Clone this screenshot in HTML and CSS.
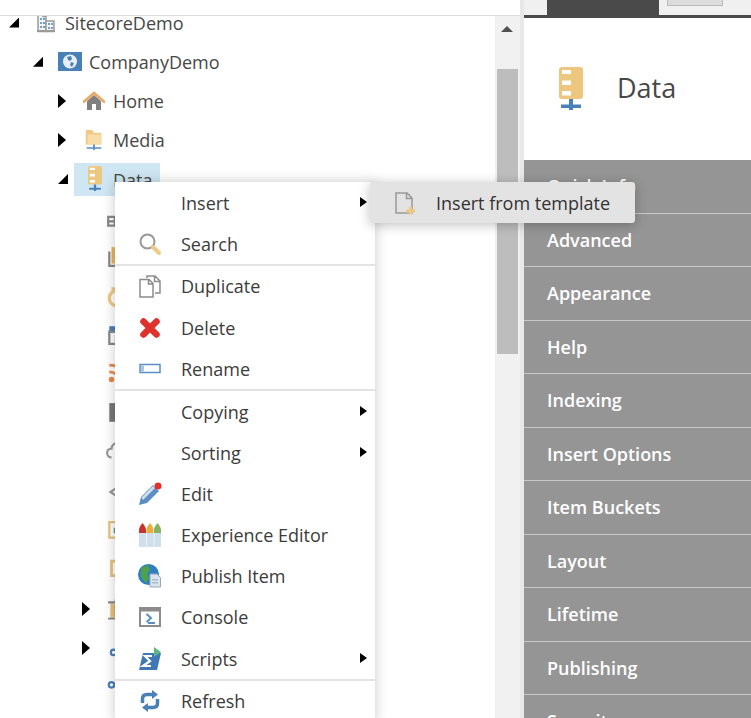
FILE: index.html
```html
<!doctype html>
<html>
<head>
	<meta charset="utf-8">
	<title>Content tree</title>
	<link rel="stylesheet" href="styles.css">
</head>
<body>
<div class="page">
	<div class="tree-pane">
		<div class="tree-top"></div>
		<div class="tree">
			<div class="node lvl0"><span class="arrow open"></span><svg class="ico" viewBox="0 0 22 22"><path fill="#f4f4f4" stroke="#9a9a9a" stroke-width="1.500" d="M3 1.500h5v3h3v15H3z"/><path fill="#f4f4f4" stroke="#9a9a9a" stroke-width="1.500" d="M11 9h8v10.500h-8z"/><path fill="#6fa0d4" d="M5 6h2v2H5zM8 6h2v2H8zM5 10h2v2H5zM8 10h2v2H8zM5 14h2v2H5zM8 14h2v2H8zM13 11h2v2h-2zM16 11h2v2h-2zM13 15h2v2h-2zM16 15h2v2h-2z"/><path fill="#9a9a9a" d="M2 18h18v2H2z"/></svg><span class="label">SitecoreDemo</span></div>
			<div class="node lvl1"><span class="arrow open"></span><svg class="ico wide" viewBox="0 0 24 20"><path fill="#4a80b8" d="M0 0h24v19H0z"/><circle cx="12" cy="9.500" r="7" fill="#e8eef5"/><path fill="#4a80b8" d="M9 5l4-1 1 3-2 2-2-1zM13 10l3 1-2 4-2-2z"/></svg><span class="label">CompanyDemo</span></div>
			<div class="node lvl2"><span class="arrow closed"></span><svg class="ico" viewBox="0 0 22 20"><path fill="#808080" d="M4 10l7-6 7 6v9h-5v-6H9v6H4z"/><path fill="none" stroke="#eba766" stroke-width="2.500" d="M0 11.500L11 2l11 9.500"/></svg><span class="label">Home</span></div>
			<div class="node lvl2"><span class="arrow closed"></span><svg class="ico" viewBox="0 0 20 24"><path fill="#f0c987" d="M1 1h7l2 3h8v13H1z"/><path fill="#f8dda8" d="M3 6h15v11H3z"/><path fill="#5b8fc4" d="M9 17h2v3h7v1.500h-7V23H9v-1.500H2V20h7z"/></svg><span class="label">Media</span></div>
			<div class="node lvl2"><span class="arrow open"></span><span class="pick"><svg class="data-ico" viewBox="0 0 24 43"><use href="#db"/></svg><span class="pick-label">Data</span></span></div>
			<div class="node lvl3"><span class="arrow none"></span><svg class="ico" viewBox="0 0 20 20"><path fill="none" stroke="#888" stroke-width="2" d="M2 9h16v8H2zM2 13h16M8 9v8M10 1v8"/></svg></div>
			<div class="node lvl3"><span class="arrow none"></span><svg class="ico" viewBox="0 0 20 20"><path fill="#888" d="M2 5h2v14H2zM2 17h14v2H2z"/><path fill="#e8b55c" d="M5 1h13v15H5z"/></svg></div>
			<div class="node lvl3"><span class="arrow none"></span><svg class="ico" viewBox="0 0 20 20"><circle cx="10" cy="12" r="7" fill="none" stroke="#f0c987" stroke-width="3"/><circle cx="10" cy="12" r="2" fill="#e8b55c"/><path fill="none" stroke="#f0c987" stroke-width="2" d="M6 6V3h8v3"/></svg></div>
			<div class="node lvl3"><span class="arrow none"></span><svg class="ico" viewBox="0 0 20 20"><path fill="#4a80b8" d="M3 2h14v6H3z"/><path fill="none" stroke="#888" stroke-width="2" d="M3 7h14v11H3z"/><path fill="#777" d="M8 10h3v6H8z"/></svg></div>
			<div class="node lvl3"><span class="arrow none"></span><svg class="ico" viewBox="0 0 20 20"><circle cx="5" cy="15" r="2.500" fill="#e58a4e"/><path fill="none" stroke="#e58a4e" stroke-width="2.500" d="M3 8c5 0 8 3 8 8M3 2c9 0 14 5 14 14"/></svg></div>
			<div class="node lvl3"><span class="arrow none"></span><svg class="ico" viewBox="0 0 20 20"><path fill="#777" d="M3 1h14v17H3z"/><path fill="#ddd" d="M9 3h5v13H9z"/></svg></div>
			<div class="node lvl3"><span class="arrow none"></span><svg class="ico" viewBox="0 0 20 20"><path fill="none" stroke="#999" stroke-width="2" d="M5 14a4 4 0 0 1 0-8 5 5 0 0 1 10 0"/><path fill="#e8b55c" d="M12 11h6v5h-6z"/></svg></div>
			<div class="node lvl3"><span class="arrow none"></span><svg class="ico" viewBox="0 0 20 20"><path fill="none" stroke="#999" stroke-width="2" d="M13 4l-9 6 9 6"/></svg></div>
			<div class="node lvl3"><span class="arrow none"></span><svg class="ico" viewBox="0 0 20 20"><path fill="none" stroke="#e8c27c" stroke-width="2" d="M3 2h14v14H3z"/><path fill="#5d9e80" d="M7 7h7v5H7z"/></svg></div>
			<div class="node lvl3"><span class="arrow none"></span><svg class="ico" viewBox="0 0 20 20"><path fill="none" stroke="#e8c27c" stroke-width="2.500" d="M5 2h12v13H5z"/><path fill="#5b8fc4" d="M8 18h5v2H8z"/></svg></div>
			<div class="node lvl3"><span class="arrow closed"></span><svg class="ico" viewBox="0 0 20 20"><path fill="#e8c27c" d="M3 5h14v13H3z"/><path fill="#888" d="M1 3h18v2H1zM1 18h18v1.500H1zM7 1h6v2H7zM7 7h2v9H7zM11 7h2v9h-2z"/></svg></div>
			<div class="node lvl3"><span class="arrow closed"></span><svg class="ico" viewBox="0 0 20 20"><path fill="none" stroke="#4a80b8" stroke-width="2" d="M11 5v6"/><circle cx="6" cy="14" r="2.500" fill="none" stroke="#4a80b8" stroke-width="2"/><path fill="#4a80b8" d="M11 13h7v2h-7z"/></svg></div>
			<div class="node lvl3"><span class="arrow none"></span><svg class="ico" viewBox="0 0 20 20"><circle cx="5" cy="8" r="2.500" fill="none" stroke="#4a80b8" stroke-width="2"/><path fill="#4a80b8" d="M10 7h8v2h-8z"/></svg></div>
		</div>
	</div>

	<div class="scrollbar">
		<div class="scroll-gap"></div>
		<div class="scroll-btn"><span class="scroll-up"></span></div>
		<div class="scroll-thumb"></div>
	</div>

	<div class="side">
		<div class="side-top">
			<div class="side-tab"></div>
			<div class="side-btn"></div>
		</div>
		<div class="side-head">
			<svg class="head-ico" viewBox="0 0 24 43"><use href="#db"/></svg>
			<span class="head-title">Data</span>
		</div>
		<div class="section">Quick Info</div>
		<div class="section">Advanced</div>
		<div class="section">Appearance</div>
		<div class="section">Help</div>
		<div class="section">Indexing</div>
		<div class="section">Insert Options</div>
		<div class="section">Item Buckets</div>
		<div class="section">Layout</div>
		<div class="section">Lifetime</div>
		<div class="section">Publishing</div>
		<div class="section">Security</div>
	</div>

	<div class="menu">
		<div class="item sub"><span class="item-ico"></span>Insert</div>
		<div class="item"><span class="item-ico"><svg viewBox="0 0 24 24"><circle cx="9.500" cy="9.500" r="7" fill="#fff" stroke="#999" stroke-width="2"/><path stroke="#f0c987" stroke-width="4" stroke-linecap="round" d="M15 15l6 6"/></svg></span>Search</div>
		<div class="rule"></div>
		<div class="item"><span class="item-ico"><svg viewBox="0 0 24 24"><path fill="none" stroke="#8c8c8c" stroke-width="1.500" d="M9 4V2h8l5 5v12h-5M2 5.500h9l4 4V23H2zM10.500 6v4h4M16.500 2.500v5h5"/></svg></span>Duplicate</div>
		<div class="item"><span class="item-ico"><svg viewBox="0 0 24 24"><path stroke="#e0312b" stroke-width="6.500" stroke-linecap="round" d="M5.500 5.500l13 13M18.500 5.500l-13 13"/></svg></span>Delete</div>
		<div class="item"><span class="item-ico"><svg viewBox="0 0 24 24"><path fill="#fff" stroke="#5b8fc4" stroke-width="1.500" d="M2 7.500h20v8H2z"/><path fill="#a8c4e0" d="M3 8.500h3v6H3z"/></svg></span>Rename</div>
		<div class="rule"></div>
		<div class="item sub"><span class="item-ico"></span>Copying</div>
		<div class="item sub"><span class="item-ico"></span>Sorting</div>
		<div class="item"><span class="item-ico"><svg viewBox="0 0 24 24"><path fill="#5b8fc4" d="M1 23l2-8L15 3l6 6L9 21z"/><path fill="#cfdff0" d="M3.500 15.500L15 4l2 2L5 18z"/><circle cx="20" cy="4" r="3.500" fill="#e0312b"/></svg></span>Edit</div>
		<div class="item"><span class="item-ico"><svg viewBox="0 0 24 24"><path fill="#cfe0ec" d="M1 10h22v14H1z"/><path fill="#eef4f8" d="M8 10h1v14H8zM15.500 10h1v14h-1z"/><path fill="#c8322c" d="M1 10V7c0-3 2-5 3.500-7C6 2 8 4 8 7v3z"/><path fill="#e8b03a" d="M8.500 10V7c0-3 2-5 3.500-7 1.500 2 3.500 4 3.500 7v3z"/><path fill="#86b35f" d="M16 10V7c0-3 2-5 3.500-7C21 2 23 4 23 7v3z"/></svg></span>Experience Editor</div>
		<div class="item"><span class="item-ico"><svg viewBox="0 0 24 24"><circle cx="10.500" cy="10.500" r="10.500" fill="#2f7fc1"/><path fill="#4fa24a" d="M3 4l7-3 2 5-3 4 2 4-3 5-5-6z"/><path fill="#dbe3ec" stroke="#9aa8ba" d="M12 10h7l3.500 3.500V23H12z"/><path fill="#a9bcd2" d="M14 15h6v1.500h-6zM14 18h6v1.500h-6z"/></svg></span>Publish Item</div>
		<div class="item"><span class="item-ico"><svg viewBox="0 0 24 24"><path fill="#fff" stroke="#8c8c8c" stroke-width="2" d="M2 3h20v18H2z"/><path fill="#8c8c8c" d="M2 3h20v3.500H2z"/><path fill="none" stroke="#5b8fc4" stroke-width="2" d="M8.500 9l4.500 4-4.500 4M10 18h7"/></svg></span>Console</div>
		<div class="item sub"><span class="item-ico"><svg viewBox="0 0 24 24"><path fill="#3f78b5" d="M5 6h18l-4 17H1z"/><path fill="none" stroke="#fff" stroke-width="2.200" d="M14 9H7l5 5-7 5h8"/><path fill="#5fb58a" d="M16 0l7 5-7 5z"/></svg></span>Scripts</div>
		<div class="rule"></div>
		<div class="item"><span class="item-ico"><svg viewBox="0 0 24 24"><path fill="none" stroke="#4a80b8" stroke-width="3.500" d="M4.500 14V10c0-3 2-4.500 4.500-4.500h6M19.500 10v4c0 3-2 4.500-4.500 4.500H9"/><path fill="#4a80b8" d="M14 1l6 4.500-6 4.500zM10 14l-6 4.500 6 4.500z"/></svg></span>Refresh</div>
	</div>

	<div class="submenu">
		<svg class="sub-ico" viewBox="0 0 20 24"><path fill="none" stroke="#999" stroke-width="1.500" d="M1 2h11l5 5v15H1zM11.500 2.500V7.500h5"/><path stroke="#f0c987" stroke-width="3" d="M11 20h9M15.500 15.500v8"/></svg>
		<span>Insert from template</span>
	</div>
</div>

<svg class="defs" width="0" height="0">
	<symbol id="db" viewBox="0 0 24 43">
		<rect x="0" y="0" width="24" height="32" rx="3" fill="#edc77f"/>
		<path fill="#fff" d="M3 3h9v4H3zM3 13.500h9v4.500H3zM3 24h9v4.500H3z"/>
		<path fill="#4a80b8" d="M10 32h4v5.500h8V41h-8v2h-4v-2H2v-3.500h8z"/>
	</symbol>
</svg>
</body>
</html>
```

FILE: styles.css
```css
html, body { margin: 0; padding: 0; }
body { width: 751px; height: 718px; overflow: hidden; background: #fff; font-family: "Open Sans", "Noto Sans", sans-serif; color: #474747; }
.defs { display: block; }

.page { position: relative; display: flex; width: 751px; height: 718px; overflow: hidden; }

/* tree */
.tree-pane { width: 495px; flex: none; overflow: hidden; }
.tree-top { position: relative; z-index: 1; height: 15px; background: #fff; border-bottom: 1px solid #dcdcdc; }
.tree { margin-top: -13px; }
.node { display: flex; align-items: center; height: 39.100px; font-size: 18px; }
.lvl0 { padding-left: 9px; }
.lvl1 { padding-left: 33px; }
.lvl2 { padding-left: 58px; }
.lvl3 { padding-left: 82px; }
.arrow { width: 0; height: 0; flex: none; }
.arrow.open { width: 10px; height: 10px; background: #000; clip-path: polygon(100% 0, 100% 100%, 0 100%); margin-right: 16px; }
.arrow.closed { border-left: 8px solid #000; border-top: 7px solid transparent; border-bottom: 7px solid transparent; margin-right: 17px; }
.arrow.none { width: 24px; }
.ico { width: 22px; height: 22px; flex: none; }
.ico.wide { width: 24px; margin-left: -1px; margin-right: -1px; }
.label { margin-left: 8px; }
.pick { display: flex; align-items: center; height: 33px; margin-top: 2px; padding: 0 8px 0 14px; background: #cfe7f3; }
.data-ico { width: 14px; height: 25px; flex: none; margin-bottom: 2px; }
.pick-label { margin-left: 11px; }
.lvl2 .arrow.open { margin-right: 6px; }

/* scrollbar */
.scrollbar { width: 25px; flex: none; background: #f1f1f1; border-right: 4px solid #e8e8e8; }
.scroll-gap { height: 15px; background: #fff; border-bottom: 1px solid #dcdcdc; }
.scroll-btn { height: 53px; padding-top: 10px; box-sizing: border-box; }
.scroll-up { display: block; width: 0; margin-left: 6px; border-left: 6px solid transparent; border-right: 6px solid transparent; border-bottom: 6px solid #505050; }
.scroll-thumb { width: 21px; height: 285px; margin-left: 2px; background: #bdbdbd; }

/* right side */
.side { flex: 1; min-width: 0; }
.side-top { display: flex; height: 15px; background: #f0f0f0; border-bottom: 3px solid #4a4a4a; padding-left: 23px; }
.side-tab { width: 112px; height: 18px; background: #4a4a4a; }
.side-btn { width: 54px; height: 5px; margin-left: 8px; background: #dcdcdc; border: 1px solid #bbb; border-top: 0; }
.side-head { display: flex; align-items: center; height: 142px; padding-left: 35px; }
.head-ico { width: 24px; height: 43px; margin-bottom: 2px; }
.head-title { margin: 0 0 4px 34px; font-size: 27px; }
.section { height: 52.500px; line-height: 53px; padding-left: 23px; background: #959595; border-bottom: 1px solid #c8c8c8; color: #fff; font-size: 18px; font-weight: 600; }

/* context menu */
.menu { position: absolute; left: 115px; top: 182px; width: 260px; background: #fff; box-shadow: 0 0 12px rgba(0, 0, 0, .22); color: #3c3c3c; font-size: 18px; }
.item { position: relative; display: flex; align-items: center; height: 41.200px; padding-left: 23px; }
.item-ico { display: block; width: 24px; height: 24px; margin-right: 19px; flex: none; }
.item-ico svg { display: block; width: 24px; height: 24px; }
.item.sub::after { content: ""; position: absolute; right: 8px; top: 15px; border-left: 7px solid #000; border-top: 5.500px solid transparent; border-bottom: 5.500px solid transparent; }
.rule { height: 2px; margin-bottom: -.5px; background: #e3e3e3; }

.submenu { position: absolute; left: 370px; top: 182px; display: flex; align-items: center; width: 265px; height: 41px; background: #e3e3e3; border-radius: 3px; box-shadow: 0 2px 12px rgba(0, 0, 0, .25); color: #333; font-size: 18px; }
.sub-ico { width: 20px; height: 24px; margin-left: 25px; margin-right: 21px; }
```
